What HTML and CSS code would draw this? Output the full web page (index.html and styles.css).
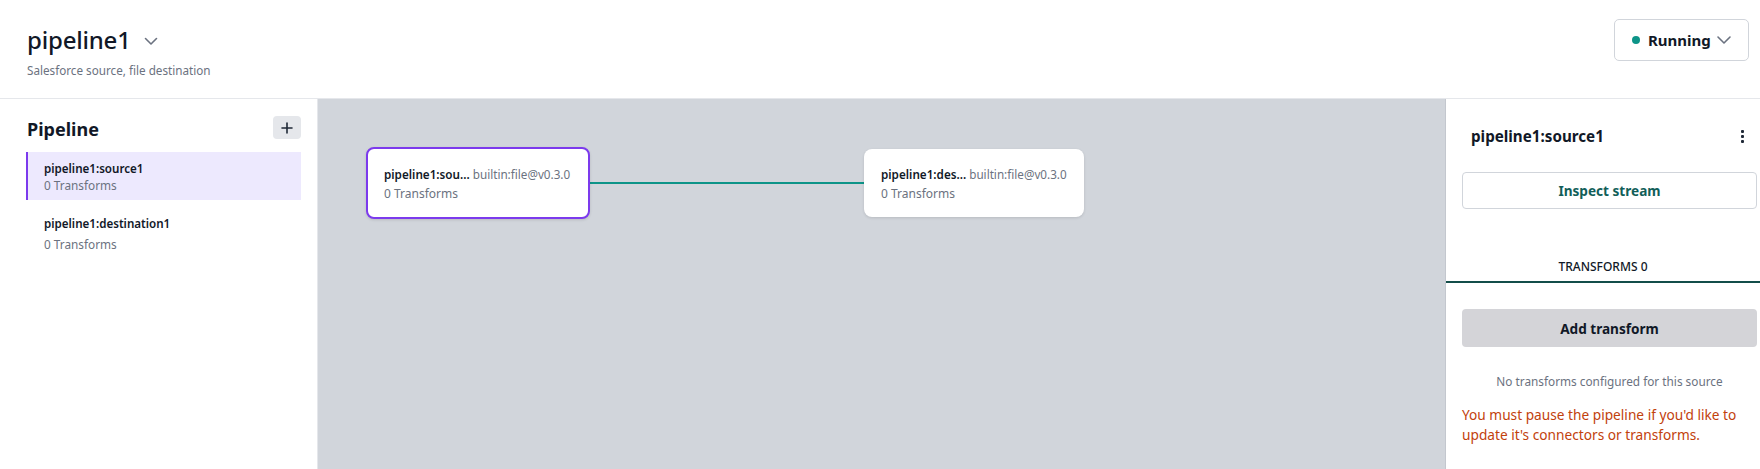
FILE: index.html
```html
<!DOCTYPE html>
<html lang="en">
<head>
<meta charset="utf-8">
<title>pipeline1</title>
<link rel="stylesheet" href="styles.css">
</head>
<body>
<div class="app">
  <header class="header">
    <div class="header__info">
      <div class="header__title-row">
        <h1 class="header__title">pipeline1</h1>
        <svg class="header__chevron" width="16" height="16" viewBox="0 0 16 16"><path d="M2.5 5.5 L8 11 L13.5 5.5" fill="none" stroke="#6b7280" stroke-width="1.6" stroke-linecap="round" stroke-linejoin="round"/></svg>
      </div>
      <p class="header__subtitle">Salesforce source, file destination</p>
    </div>
    <button class="status-btn">
      <span class="status-btn__dot"></span>
      <span class="status-btn__label">Running</span>
      <svg class="status-btn__chevron" width="16" height="16" viewBox="0 0 16 16"><path d="M2 5 L8 11 L14 5" fill="none" stroke="#6b7280" stroke-width="1.6" stroke-linecap="round" stroke-linejoin="round"/></svg>
    </button>
  </header>
  <main class="main">
    <aside class="sidebar">
      <div class="sidebar__head">
        <h2 class="sidebar__title">Pipeline</h2>
        <button class="icon-btn">
          <svg width="12" height="12" viewBox="0 0 12 12"><path d="M6 1 V11 M1 6 H11" stroke="#1f2937" stroke-width="1.6" stroke-linecap="round"/></svg>
        </button>
      </div>
      <ul class="conn-list">
        <li class="conn conn--active">
          <span class="conn__name">pipeline1:source1</span>
          <span class="conn__sub">0 Transforms</span>
        </li>
        <li class="conn conn--idle">
          <span class="conn__name">pipeline1:destination1</span>
          <span class="conn__sub">0 Transforms</span>
        </li>
      </ul>
    </aside>
    <section class="canvas">
      <div class="edge"></div>
      <div class="node node--selected node--source">
        <div class="node__row"><span class="node__name">pipeline1:sou...</span><span class="node__plugin">builtin:file@v0.3.0</span></div>
        <div class="node__sub">0 Transforms</div>
      </div>
      <div class="node node--dest">
        <div class="node__row"><span class="node__name">pipeline1:des...</span><span class="node__plugin">builtin:file@v0.3.0</span></div>
        <div class="node__sub">0 Transforms</div>
      </div>
    </section>
    <aside class="panel">
      <div class="panel__head">
        <h3 class="panel__title">pipeline1:source1</h3>
        <span class="kebab"><i></i><i></i><i></i></span>
      </div>
      <div class="panel__body">
        <button class="btn btn--outline">Inspect stream</button>
      </div>
      <div class="tabs">
        <div class="tab tab--active">TRANSFORMS 0</div>
      </div>
      <div class="panel__body panel__body--transforms">
        <button class="btn btn--gray">Add transform</button>
        <p class="empty">No transforms configured for this source</p>
        <p class="warning">You must pause the pipeline if you'd like to update it's connectors or transforms.</p>
      </div>
    </aside>
  </main>
</div>
</body>
</html>
```

FILE: styles.css
```css
* { box-sizing: border-box; }
html, body { margin: 0; padding: 0; }
body {
  font-family: "Noto Sans", "Open Sans", sans-serif;
  color: #111827;
  background: #fff;
  width: 1760px;
  height: 469px;
  overflow: hidden;
}
h1, h2, h3, p, ul { margin: 0; padding: 0; }
ul { list-style: none; }
button { font-family: inherit; cursor: pointer; }

.app { display: flex; flex-direction: column; height: 469px; }

.header {
  height: 99px;
  flex: none;
  display: flex;
  justify-content: space-between;
  align-items: flex-start;
  padding: 19px 11px 0 27px;
  border-bottom: 1px solid #e5e7eb;
}
.header__info { padding-top: 5px; }
.header__title-row { display: flex; align-items: center; gap: 12px; height: 32px; }
.header__title { font-size: 24px; line-height: 32px; font-weight: 500; color: #111827; letter-spacing: -0.2px; }
.header__chevron { margin-top: 2px; }
.header__subtitle { margin-top: 6px; font-size: 11.7px; line-height: 16px; color: #6b7280; }

.status-btn {
  width: 135px;
  height: 42px;
  display: flex;
  align-items: center;
  padding: 0 0 0 17px;
  background: #fff;
  border: 1px solid #d1d5db;
  border-radius: 5px;
}
.status-btn__dot { width: 8px; height: 8px; border-radius: 50%; background: #0d9488; }
.status-btn__label { margin-left: 8px; font-size: 15px; font-weight: 700; color: #111827; }
.status-btn__chevron { margin-left: 5px; }

.main { flex: 1; display: flex; min-height: 0; }

.sidebar {
  width: 318px;
  flex: none;
  border-right: 1px solid #e5e7eb;
  padding: 17px 16px 0 26px;
}
.sidebar__head { display: flex; justify-content: space-between; align-items: center; height: 23px; padding-left: 1px; }
.sidebar__title { font-size: 18px; line-height: 24px; font-weight: 700; color: #111827; padding-top: 2px; }
.icon-btn {
  width: 28px; height: 23px;
  display: flex; align-items: center; justify-content: center;
  background: #e5e7eb; border: none; border-radius: 4px; padding: 0;
}
.conn-list { margin-top: 13px; display: flex; flex-direction: column; gap: 4px; }
.conn { display: flex; flex-direction: column; padding: 9px 16px 7px; border-left: 2px solid transparent; }
.conn--active { background: #ede9fe; border-left-color: #7c3aed; }
.conn--idle { row-gap: 4px; padding-top: 12px; }
.conn__name { font-size: 11.6px; line-height: 16px; font-weight: 600; color: #111827; }
.conn__sub { font-size: 11.8px; line-height: 16px; color: #6b7280; }

.canvas {
  flex: 1;
  position: relative;
  background: #d1d5db;
  border-right: 1px solid #c3c7ce;
}
.edge {
  position: absolute;
  left: 272px; top: 83px;
  width: 274px; height: 2px;
  background: #0d9488;
}
.node {
  position: absolute;
  background: #fff;
  border-radius: 8px;
  padding: 17px 17px 15px;
  display: flex; flex-direction: column; gap: 4px;
  box-shadow: 0 1px 3px rgba(0,0,0,0.12);
}
.node--source { left: 48px; top: 48px; width: 224px; height: 72px; border: 2px solid #7c3aed; padding: 17px 16px 15px; }
.node--dest { left: 546px; top: 50px; width: 220px; height: 68px; }
.node__row { display: flex; gap: 3px; white-space: nowrap; }
.node__name { font-size: 11.7px; line-height: 16px; font-weight: 600; color: #111827; }
.node__plugin { font-size: 11.7px; line-height: 16px; color: #6b7280; }
.node__sub { font-size: 12px; line-height: 16px; color: #6b7280; }

.panel { width: 314px; flex: none; display: flex; flex-direction: column; }
.panel__head {
  display: flex; justify-content: space-between; align-items: center;
  padding: 25px 16px 0 25px; height: 49px;
}
.panel__title { font-size: 15.2px; line-height: 22px; font-weight: 700; color: #111827; }
.kebab { display: flex; flex-direction: column; gap: 2px; }
.kebab i { display: block; width: 3px; height: 3px; background: #1f2937; border-radius: 1px; }
.panel__body { padding: 24px 3px 0 16px; }
.btn {
  width: 100%; height: 37px;
  font-size: 13.6px; font-weight: 700;
  border-radius: 4px;
}
.btn--outline { background: #fff; border: 1px solid #d1d5db; color: #115e59; }
.btn--gray { background: #d4d4d8; border: none; color: #111827; height: 38px; }
.tabs { margin-top: 50px; border-bottom: 2px solid #134e4a; }
.tab { text-align: center; font-size: 12px; line-height: 16px; font-weight: 500; color: #111827; padding-bottom: 6px; }
.panel__body--transforms { padding-top: 26px; }
.empty { margin-top: 26px; text-align: center; font-size: 11.8px; line-height: 16px; color: #6b7280; }
.warning { margin-top: 16px; font-size: 13.7px; line-height: 20px; color: #c2410c; }
```
